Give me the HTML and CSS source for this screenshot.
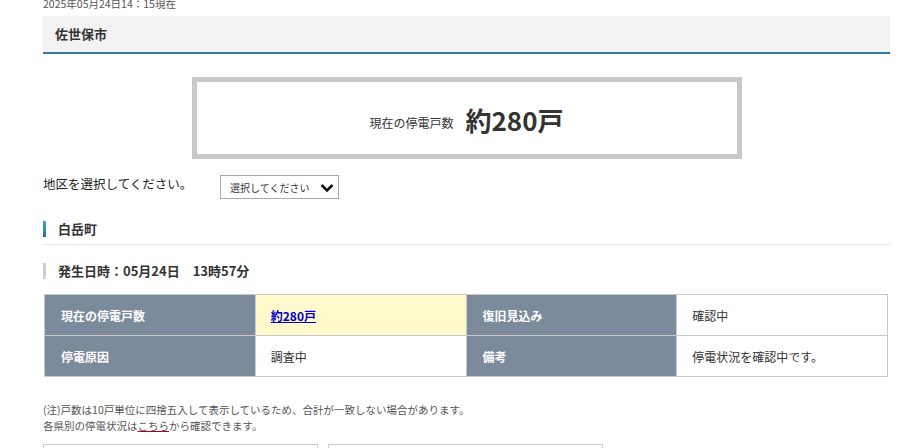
FILE: index.html
```html
<!DOCTYPE html>
<html lang="ja">
<head>
<meta charset="utf-8">
<title>停電情報 佐世保市</title>
<link rel="stylesheet" href="styles.css">
</head>
<body>
<div class="page">
  <div class="stamp">2025年05月24日14：15現在</div>
  <h2 class="city">佐世保市</h2>
  <div class="summary">
    <span class="summary-label">現在の停電戸数</span>
    <span class="summary-value">約280戸</span>
  </div>
  <div class="area-row">
    <div class="area-label">地区を選択してください。</div>
    <div class="select">
      <span>選択してください</span>
      <svg class="chev" width="14" height="10" viewBox="0 0 14 10"><polyline points="1.5,2 7,7.5 12.5,2" fill="none" stroke="#111" stroke-width="2.6"/></svg>
    </div>
  </div>
  <div class="town"><span class="town-name">白岳町</span></div>
  <div class="occur"><span class="occur-text">発生日時：05月24日　13時57分</span></div>
  <table class="info">
    <tr>
      <th>現在の停電戸数</th>
      <td class="hl"><a href="#">約280戸</a></td>
      <th>復旧見込み</th>
      <td>確認中</td>
    </tr>
    <tr>
      <th>停電原因</th>
      <td>調査中</td>
      <th>備考</th>
      <td>停電状況を確認中です。</td>
    </tr>
  </table>
  <div class="notes">
    <p>(注)戸数は10戸単位に四捨五入して表示しているため、合計が一致しない場合があります。</p>
    <p>各県別の停電状況は<a href="#" class="red">こちら</a>から確認できます。</p>
  </div>
  <div class="boxes">
    <div class="box"></div>
    <div class="box"></div>
  </div>
</div>
</body>
</html>
```
FILE: styles.css
```css
html, body { margin: 0; padding: 0; background: #fff; }
body {
  font-family: "Noto Sans CJK JP", "Noto Sans", sans-serif;
  color: #333;
  overflow: hidden;
}
.page {
  width: 847px;
  margin-left: 43px;
}
.stamp {
  font-size: 10.5px;
  line-height: 12px;
  color: #555;
  margin-top: -2px;
  height: 12px;
}
.city {
  margin: 6px 0 0;
  height: 36px;
  line-height: 36px;
  padding: 0 12px;
  background: #f3f3f3;
  border-bottom: 2px solid #2f7a9c;
  font-size: 13px;
  font-weight: bold;
  color: #333;
}
.summary {
  width: 540px;
  height: 70px;
  margin: 23px auto 0;
  border: 5px solid #c8c8c8;
  display: flex;
  justify-content: center;
  align-items: center;
  gap: 12px;
  padding-top: 2px;
  box-sizing: content-box;
}
.summary-label { font-size: 12px; padding-top: 6px; }
.summary-value { font-size: 26px; font-weight: bold; color: #333; }
.area-row {
  display: flex;
  align-items: flex-start;
  margin-top: 16px;
}
.area-label {
  width: 177px;
  font-size: 12.5px;
  line-height: 18px;
  color: #222;
}
.select {
  width: 104px;
  height: 22px;
  border: 1px solid #aaa;
  display: flex;
  align-items: center;
  justify-content: space-between;
  padding: 0 4px 0 9px;
  box-sizing: content-box;
  font-size: 10px;
  color: #333;
}
.select .chev { margin-top: 1px; }
.town {
  margin-top: 14px;
  padding: 8px 0 7px;
  border-bottom: 1px solid #e6e6e6;
}
.town-name {
  display: block;
  border-left: 3px solid #2a85c2;
  border-image: linear-gradient(#45a9e0, #1d6aa6) 1;
  padding-left: 12px;
  font-size: 13px;
  font-weight: bold;
  line-height: 16px;
  color: #333;
}
.occur { margin-top: 18px; }
.occur-text {
  display: block;
  border-left: 3px solid #cfcfcf;
  padding-left: 12px;
  font-size: 13px;
  font-weight: bold;
  line-height: 16px;
  color: #333;
}
.info {
  margin: 15px 2px 0 1px;
  width: 844px;
  border-collapse: collapse;
  table-layout: fixed;
}
.info th, .info td {
  border: 1px solid #c9c9c9;
  height: 41px;
  padding: 0 15px;
  font-size: 12px;
  text-align: left;
  box-sizing: border-box;
}
.info th {
  background: #7b8b9c;
  color: #fff;
  font-weight: bold;
  padding-left: 16px;
}
.info td { background: #fff; color: #333; }
.info td.hl { background: #fff9cc; }
.info td.hl a { color: #0000cc; font-weight: bold; text-decoration: underline; }
.notes {
  margin-top: 25px;
  font-size: 10.5px;
  color: #555;
}
.notes p { margin: 0; line-height: 16px; }
.notes a.red { color: #555; text-decoration: underline; text-decoration-color: #b00020; }
.boxes {
  display: flex;
  gap: 10px;
  margin-top: 10px;
}
.box {
  width: 273px;
  height: 60px;
  border: 1px solid #ccc;
}
```
